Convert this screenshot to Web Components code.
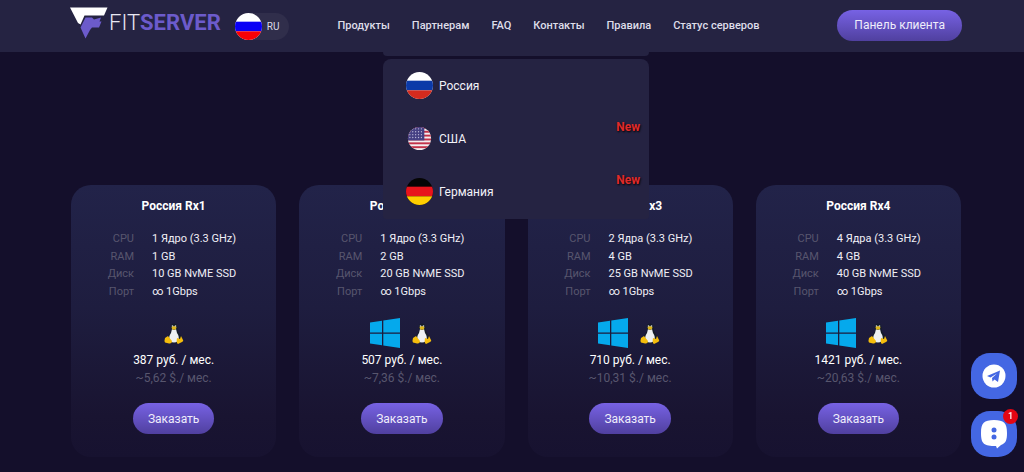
<!DOCTYPE html>
<html lang="ru">
<head>
<meta charset="utf-8">
<meta name="viewport" content="width=device-width, initial-scale=1">
<title>FITSERVER</title>
<style>
  html { min-height: 100%; background: #140f2b; }
  body {
    margin: 0;
    min-height: 100vh;
    font-family: Roboto, "Open Sans", sans-serif;
    color: #fff;
    background: #140f2b;
    --panel: #252342;
    --muted: #58566e;
    --accent: linear-gradient(#7762e4, #50409f);
    --edge-left: 71px;
    --edge-right: 63px;
  }
</style>
</head>
<body>
<site-header>
  <brand-logo slot="brand"></brand-logo>
  <lang-switch slot="brand">RU</lang-switch>
  <nav-link slot="nav" href="#products">Продукты</nav-link>
  <nav-link slot="nav" href="#partners">Партнерам</nav-link>
  <nav-link slot="nav" href="#faq">FAQ</nav-link>
  <nav-link slot="nav" href="#contacts">Контакты</nav-link>
  <nav-link slot="nav" href="#rules">Правила</nav-link>
  <nav-link slot="nav" href="#status">Статус серверов</nav-link>
  <pill-button slot="action" wide>Панель клиента</pill-button>
  <country-menu slot="menu">
    <country-item flag="ru">Россия</country-item>
    <country-item flag="us" fresh>США</country-item>
    <country-item flag="de" fresh>Германия</country-item>
  </country-menu>
</site-header>
<plan-grid>
  <plan-card name="Россия Rx1" cpu="1 Ядро (3.3 GHz)" ram="1 GB" disk="10 GB NvME SSD" price="387 руб. / мес." usd="~5,62 $./ мес."></plan-card>
  <plan-card name="Россия Rx2" cpu="1 Ядро (3.3 GHz)" ram="2 GB" disk="20 GB NvME SSD" price="507 руб. / мес." usd="~7,36 $./ мес." windows></plan-card>
  <plan-card name="Россия Rx3" cpu="2 Ядра (3.3 GHz)" ram="4 GB" disk="25 GB NvME SSD" price="710 руб. / мес." usd="~10,31 $./ мес." windows></plan-card>
  <plan-card name="Россия Rx4" cpu="4 Ядра (3.3 GHz)" ram="4 GB" disk="40 GB NvME SSD" price="1421 руб. / мес." usd="~20,63 $./ мес." windows></plan-card>
</plan-grid>
<contact-dock></contact-dock>

<script>
const define = (name, render) => customElements.define(name, class extends HTMLElement {
  connectedCallback() {
    if (this.shadowRoot) return;
    this.attachShadow({ mode: 'open' }).innerHTML = render(this);
  }
});

const flags = {
  ru: '<rect width="28" height="28" fill="#fff"/><rect y="9" width="28" height="10" fill="#0b3aa8"/><rect y="19" width="28" height="9" fill="#d52b1e"/>',
  ruBright: '<rect width="28" height="28" fill="#fff"/><rect y="9" width="28" height="10" fill="#0a00f5"/><rect y="19" width="28" height="9" fill="#f80006"/>',
  de: '<rect width="28" height="28" fill="#050505"/><rect y="9" width="28" height="10" fill="#e8141c"/><rect y="19" width="28" height="9" fill="#ffce00"/>',
  us: '<rect width="28" height="28" fill="#f3eef0"/>' +
      [2, 6, 10, 14, 18, 22].map(y => `<rect y="${y}" width="28" height="2" fill="#c2324a"/>`).join('') +
      '<rect width="19" height="16" fill="#454083"/>' +
      [4, 7, 10, 13].map(y => [4, 7, 10, 13, 16].map(x => `<circle cx="${x}" cy="${y}" r=".7" fill="#b9b6d8"/>`).join('')).join('')
};
const flagSvg = (key, r = 14) => `<svg width="27" height="27" viewBox="0 0 28 28" aria-hidden="true">
  <clipPath id="c"><circle cx="14" cy="14" r="${r}"/></clipPath><g clip-path="url(#c)">${flags[key]}</g></svg>`;

define('site-header', () => `
  <style>
    :host { display: block; position: relative; z-index: 2; background: var(--panel); }
    header { position: relative; display: flex; align-items: center; height: 52px;
      margin: 0 var(--edge-right) 0 var(--edge-left); }
    .brand { display: flex; align-items: center; gap: 14px; }
    nav { display: flex; flex: none; gap: 22px; margin-left: 48px; }
    .action { margin: 0 -1px 2px auto; }
  </style>
  <header>
    <div class="brand"><slot name="brand"></slot></div>
    <nav><slot name="nav"></slot></nav>
    <div class="action"><slot name="action"></slot></div>
    <slot name="menu"></slot>
  </header>`);

define('brand-logo', () => `
  <style>
    :host { display: block; }
    a { display: flex; align-items: center; gap: 1px; color: #e9e8f2; text-decoration: none;
      font-size: 22px; line-height: 32px; font-weight: 300; margin: 0 0 6px -1px; }
    b { font-weight: 700; color: #6c5bcb; }
    svg { display: block; }
  </style>
  <a href="#"><svg width="38" height="32" viewBox="0 0 38 32" aria-hidden="true">
    <path d="M0 0.500h37.500l-3.500 8H14.500L10.500 17.500 8 16z" fill="#fff"/>
    <path d="M15.500 10.500H22L24 12.500 31 10.500 29.500 14.500H31.500L29 20.500H22L20 23 15.500 31.500 10.500 20.500z" fill="#6c5bcb"/>
  </svg><span>FIT<b>SERVER</b></span></a>`);

define('lang-switch', () => `
  <style>
    :host { display: block; }
    button { display: flex; align-items: center; gap: 5px; height: 27px; padding: 0 10px 0 0; border: 0;
      border-radius: 14px; background: #302e4b; color: #dddce8; font: 400 10px/27px Roboto, sans-serif; }
    svg { display: block; }
  </style>
  <button type="button">${flagSvg('ruBright')}<slot></slot></button>`);

define('nav-link', el => `
  <style>
    :host { display: block; }
    a { display: block; color: #dedde9; text-decoration: none; white-space: nowrap;
      font-size: 11px; line-height: 16px; font-weight: 500; }
  </style>
  <a href="${el.getAttribute('href')}"><slot></slot></a>`);

define('pill-button', () => `
  <style>
    :host { display: inline-block; }
    button { height: 31px; padding: 0 15px; border: 0; border-radius: 16px; background: var(--accent);
      color: #efedfb; white-space: nowrap; font: 400 12px/30px Roboto, sans-serif; display: block; }
    :host([wide]) button { padding: 0 17px; }
  </style>
  <button type="button"><slot></slot></button>`);

define('country-menu', () => `
  <style>
    :host { position: absolute; top: 52px; left: 50%; width: 266px; transform: translateX(-50%); }
    .tab { height: 4px; border-radius: 0 0 6px 6px; background: var(--panel); }
    .list { display: grid; margin-top: 3px; padding-bottom: 1px; border-radius: 8px 8px 3px 3px; background: var(--panel); }
  </style>
  <div class="tab"></div>
  <div class="list"><slot></slot></div>`);

define('country-item', el => `
  <style>
    :host { display: block; }
    a { display: flex; align-items: center; gap: 6px; height: 53px; padding: 0 9px 0 23px; color: #f3f2f8;
      text-decoration: none; font-size: 12px; line-height: 18px; }
    svg { display: block; }
    em { margin: 6px 0 0 auto; align-self: flex-start; font-style: normal; font-weight: 700; color: #e02a2a;
      text-shadow: 1px 1px 2px #000; }
  </style>
  <a href="#${el.getAttribute('flag')}">${flagSvg(el.getAttribute('flag'), el.getAttribute('flag') === 'us' ? 12 : 14)}
    <slot></slot>${el.hasAttribute('fresh') ? '<em>New</em>' : ''}</a>`);

define('plan-grid', () => `
  <style>
    :host { display: grid; grid-template-columns: repeat(4, minmax(0, 1fr)); gap: 23px;
      margin: 133px var(--edge-right) 15px var(--edge-left); }
  </style>
  <slot></slot>`);

const windowsIcon = `<svg width="30" height="30" viewBox="0 0 30 30" role="img" aria-label="Windows">
  <path d="M0 4.5 12 2.8V14.4H0zM13.3 2.6 30 0V14.4H13.3zM0 15.7H12V27.3L0 25.6zM13.3 15.7H30V30L13.3 27.5z" fill="#05a9ec"/></svg>`;
const linuxIcon = `<svg width="24" height="22" viewBox="-2 -1 24 22" role="img" aria-label="Linux">
  <path d="M7 2Q10-1 13 2L14 8 18 15Q16 21 10 20 4 21 3 15L7 8z" fill="#151c28"/>
  <path d="M8 6Q10 8 12 6L13 10Q16 14 14 18 10 21 6 18 4 14 7 10z" fill="#eef0f2"/>
  <path d="M7.500 4Q10 2 12.500 4L12 6 10 7 8 6z" fill="#dcb51c"/>
  <circle cx="8.500" cy="3" r=".8" fill="#ddd"/><circle cx="11.500" cy="3" r=".8" fill="#ddd"/>
  <path d="M1 15 4 13 8 18Q8 21 5 20.500L1 19.500Q0 18 1 15zM13 15 16 16 17 13 19 17Q20 18 18 19L14 21Q12 20 13 15z" fill="#f5bd0c"/></svg>`;

define('plan-card', el => {
  const a = n => el.getAttribute(n);
  const rows = [['CPU', a('cpu')], ['RAM', a('ram')], ['Диск', a('disk')], ['Порт', '∞ 1Gbps']];
  return `
  <style>
    :host { display: flex; flex-direction: column; align-items: center; padding: 12px 0 23px; border-radius: 20px;
      background: linear-gradient(#222349, #1e1d3f 45%, #191431 85%, #171230); }
    h2 { margin: 0; font-size: 12px; line-height: 18px; font-weight: 700; }
    table { align-self: stretch; height: 70px; margin-top: 15px; border-collapse: collapse; font-size: 11px; line-height: 17px; }
    th { width: 63px; padding: 0; text-align: right; font-weight: 400; color: var(--muted); }
    td { padding: 0 0 0 18px; white-space: nowrap; color: #f0eff6; }
    .os { display: flex; align-items: center; gap: 10px; height: 30px; margin: 18px 0 3px; }
    p { margin: 0; font-size: 12px; line-height: 18px; }
    .usd { color: var(--muted); }
    pill-button { margin-top: 16px; }
  </style>
  <h2>${a('name')}</h2>
  <table>${rows.map(([k, v]) => `<tr><th scope="row">${k}</th><td>${v}</td></tr>`).join('')}</table>
  <div class="os">${el.hasAttribute('windows') ? windowsIcon : ''}${linuxIcon}</div>
  <p>${a('price')}</p>
  <p class="usd">${a('usd')}</p>
  <pill-button>Заказать</pill-button>`;
});

define('contact-dock', () => `
  <style>
    :host { position: fixed; right: 7px; bottom: 15px; z-index: 3; display: grid; gap: 12px; }
    button { position: relative; display: grid; place-items: center; width: 46px; height: 46px; padding: 0; border: 0;
      border-radius: 19px; background: #4467e3; }
    svg { display: block; }
    span { position: absolute; top: -2px; right: -1px; width: 15px; height: 15px; border-radius: 8px; background: #e30613;
      color: #fff; font: 500 9px/15px Roboto, sans-serif; text-align: center; }
  </style>
  <button type="button" aria-label="Telegram"><svg width="24" height="24" viewBox="0 0 24 24" aria-hidden="true">
    <circle cx="12" cy="12" r="11.500" fill="#fff"/>
    <path d="M5 12 18 6.500 16 18 12.500 15.500 10.500 17.500 10 14 15 9.500 8.500 13.500z" fill="#4467e3"/></svg></button>
  <button type="button" aria-label="Чат"><svg width="28" height="30" viewBox="0 0 28 30" aria-hidden="true">
    <path d="M14 1C24 1 27 4 27 14 27 21 26 24 21 26L17 29.500 16 27C4 27 1 25 1 14 1 4 4 1 14 1z" fill="#fff"/>
    <circle cx="14" cy="11" r="2.500" fill="#4467e3"/><circle cx="14" cy="18" r="2.500" fill="#4467e3"/></svg><span>1</span></button>`);
</script>
</body>
</html>
